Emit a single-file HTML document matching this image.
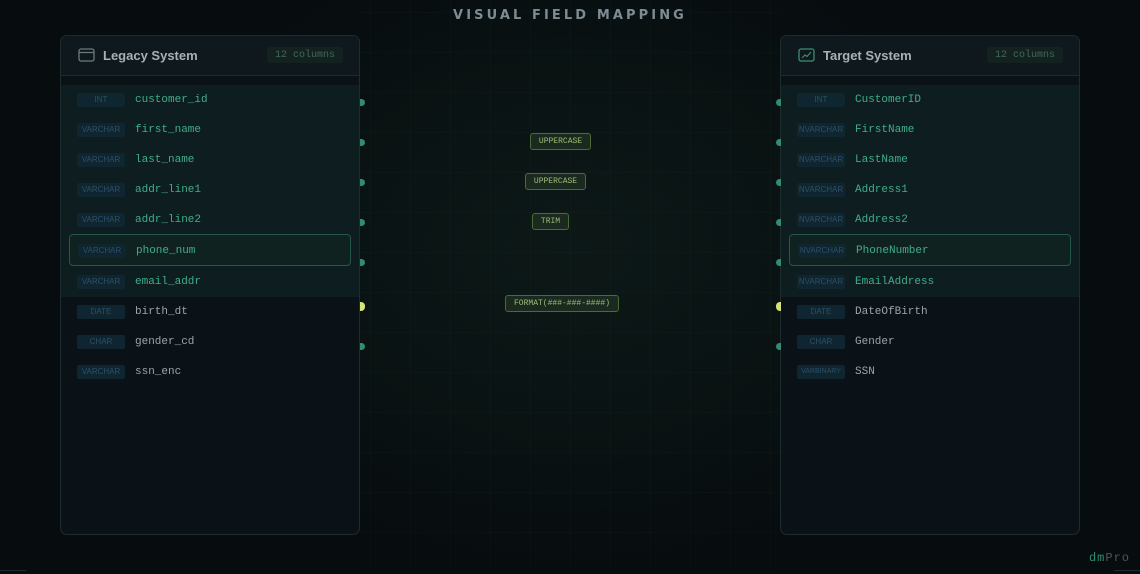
<!DOCTYPE html>
<html><head><meta charset="utf-8"><style>
*{margin:0;padding:0;box-sizing:border-box}
body{width:1140px;height:574px;overflow:hidden;background:#070d10;position:relative;font-family:"Liberation Sans",sans-serif}
.bg{position:absolute;inset:0;background:radial-gradient(ellipse 420px 320px at 570px 250px,#0c1817 0%,#0a1313 50%,#070c0f 100%)}
.grid{position:absolute;left:360px;top:0;width:420px;height:574px;background-image:linear-gradient(rgba(60,120,90,.045) 1px,transparent 1px),linear-gradient(90deg,rgba(60,120,90,.045) 1px,transparent 1px);background-size:40px 40px;background-position:10px 12px}
h1{position:absolute;top:8px;left:0;width:1140px;text-align:center;font-size:13px;letter-spacing:3.1px;color:#7d8c94;font-weight:bold;font-family:"DejaVu Sans",sans-serif}
.panel{position:absolute;top:35px;width:300px;height:500px;border:1px solid #1d2c2e;border-radius:7px;background:#0a1217;overflow:hidden}
.hd{height:40px;border-bottom:1px solid #1f2b2d;background:#0f181c;position:relative}
.hd .t{position:absolute;left:42px;top:12px;font-size:13px;font-weight:bold;color:#a7b1b6}
.hd .c{position:absolute;right:16px;top:11px;height:16px;padding:0 8px;background:#14221f;border-radius:3px;font:10px "Liberation Mono",monospace;color:#40685a;line-height:17px}
.strip{height:9px;background:#0a1216}
.tint{position:absolute;left:0;top:49px;width:300px;height:212px;background:#0e1d1f}
.row{position:absolute;left:0;width:300px;height:30px}
.b{position:absolute;left:16px;top:8px;width:48px;height:14px;background:#0f2530;border-radius:2px;font:8px "Liberation Sans",sans-serif;color:#2c5068;text-align:center;line-height:14px}
.n{position:absolute;left:74px;top:9px;font:11px "Liberation Mono",monospace;color:#3fae8a}
.g .n{color:#9aa5a8}
.sel{position:absolute;left:8px;width:282px;height:32px;border:1px solid #25574f;border-radius:4px;background:#10221f}
.dot{position:absolute;width:5px;height:7px;background:#2f8e6e;border-radius:0 4px 4px 0}
.dl{left:360px}.dr{left:776px;border-radius:4px 0 0 4px}
.y{background:#d6e27a;height:9px}
.tf{position:absolute;height:17px;border:1px solid #4b6a3a;background:#1a2a1f;border-radius:3px;font:8px "Liberation Mono",monospace;color:#9fbc78;line-height:15px;text-align:center}
</style></head><body>
<div class="bg"></div><div class="grid"></div>
<h1>VISUAL FIELD MAPPING</h1>

<div class="panel" style="left:60px">
<div class="hd"><svg style="position:absolute;left:17px;top:12px" width="17" height="14" viewBox="0 0 17 14"><rect x="1" y="1" width="15" height="12" rx="2" fill="none" stroke="#6d7a80" stroke-width="1.3"/><line x1="1" y1="4.5" x2="16" y2="4.5" stroke="#6d7a80" stroke-width="1.2"/></svg><span class="t">Legacy System</span><span class="c">12 columns</span></div>
<div class="strip"></div><div class="tint"></div>
<div class="sel" style="top:198px"></div>
<div class="row" style="top:49px"><span class="b">INT</span><span class="n">customer_id</span></div>
<div class="row" style="top:79px"><span class="b">VARCHAR</span><span class="n">first_name</span></div>
<div class="row" style="top:109px"><span class="b">VARCHAR</span><span class="n">last_name</span></div>
<div class="row" style="top:139px"><span class="b">VARCHAR</span><span class="n">addr_line1</span></div>
<div class="row" style="top:169px"><span class="b">VARCHAR</span><span class="n">addr_line2</span></div>
<div class="row" style="top:200px"><span class="b" style="left:17px">VARCHAR</span><span class="n" style="left:75px">phone_num</span></div>
<div class="row" style="top:231px"><span class="b">VARCHAR</span><span class="n">email_addr</span></div>
<div class="row g" style="top:261px"><span class="b">DATE</span><span class="n">birth_dt</span></div>
<div class="row g" style="top:291px"><span class="b">CHAR</span><span class="n">gender_cd</span></div>
<div class="row g" style="top:321px"><span class="b">VARCHAR</span><span class="n">ssn_enc</span></div>
</div>

<div class="panel" style="left:780px">
<div class="hd"><svg style="position:absolute;left:17px;top:12px" width="17" height="14" viewBox="0 0 17 14"><rect x="1" y="1" width="15" height="12" rx="2" fill="none" stroke="#3d8f74" stroke-width="1.3"/><path d="M4 10 L7 7 L9 8.5 L13 4" fill="none" stroke="#3d8f74" stroke-width="1.1"/></svg><span class="t">Target System</span><span class="c">12 columns</span></div>
<div class="strip"></div><div class="tint"></div>
<div class="sel" style="top:198px"></div>
<div class="row" style="top:49px"><span class="b">INT</span><span class="n">CustomerID</span></div>
<div class="row" style="top:79px"><span class="b">NVARCHAR</span><span class="n">FirstName</span></div>
<div class="row" style="top:109px"><span class="b">NVARCHAR</span><span class="n">LastName</span></div>
<div class="row" style="top:139px"><span class="b">NVARCHAR</span><span class="n">Address1</span></div>
<div class="row" style="top:169px"><span class="b">NVARCHAR</span><span class="n">Address2</span></div>
<div class="row" style="top:200px"><span class="b" style="left:17px">NVARCHAR</span><span class="n" style="left:75px">PhoneNumber</span></div>
<div class="row" style="top:231px"><span class="b">NVARCHAR</span><span class="n">EmailAddress</span></div>
<div class="row g" style="top:261px"><span class="b">DATE</span><span class="n">DateOfBirth</span></div>
<div class="row g" style="top:291px"><span class="b">CHAR</span><span class="n">Gender</span></div>
<div class="row g" style="top:321px"><span class="b" style="font-size:7px">VARBINARY</span><span class="n">SSN</span></div>
</div>

<div class="dot dl" style="top:99px"></div><div class="dot dl" style="top:139px"></div><div class="dot dl" style="top:179px"></div><div class="dot dl" style="top:219px"></div><div class="dot dl" style="top:259px"></div><div class="dot dl y" style="top:302px"></div><div class="dot dl" style="top:343px"></div>
<div class="dot dr" style="top:99px"></div><div class="dot dr" style="top:139px"></div><div class="dot dr" style="top:179px"></div><div class="dot dr" style="top:219px"></div><div class="dot dr" style="top:259px"></div><div class="dot dr y" style="top:302px"></div><div class="dot dr" style="top:343px"></div>

<div class="tf" style="left:530px;top:133px;width:61px">UPPERCASE</div>
<div class="tf" style="left:525px;top:173px;width:61px">UPPERCASE</div>
<div class="tf" style="left:532px;top:213px;width:37px">TRIM</div>
<div class="tf" style="left:505px;top:295px;width:114px">FORMAT(###-###-####)</div>

<div style="position:absolute;right:10px;top:551px;font:12px 'Liberation Mono',monospace;letter-spacing:1px"><span style="color:#2f8e6e">dm</span><span style="color:#4a5860">Pro</span></div>
<div style="position:absolute;left:1114px;top:570px;width:26px;height:1px;background:#1d2c2e"></div>
<div style="position:absolute;left:0;top:570px;width:26px;height:1px;background:#1d2c2e"></div>
</body></html>
